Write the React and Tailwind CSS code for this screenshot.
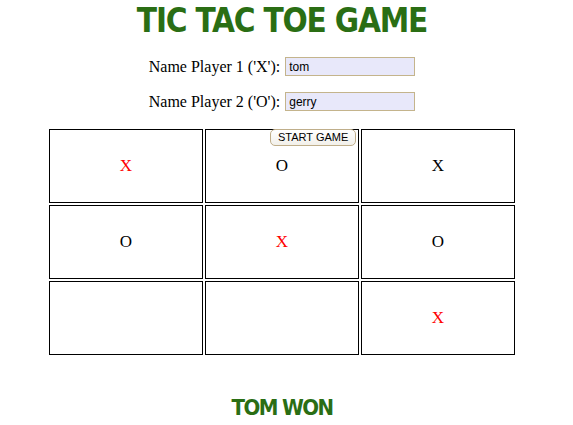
import React, { useState } from 'react';

const board = ['X', 'O', 'X', 'O', 'X', 'O', '', '', 'X'];
const winLine = [0, 4, 8];

const Cell = ({ value, win }) => (
  <div className="w-[154px] h-[74px] border border-black flex items-center justify-center">
    <span className={`text-[17px] font-['Liberation_Serif',serif] ${win ? 'text-[#ff0000]' : 'text-black'}`}>
      {value}
    </span>
  </div>
);

const NameRow = ({ label, value, onChange }) => (
  <div className="flex items-center h-[19px]">
    <span className="text-[16px] font-['Liberation_Serif',serif] text-black mr-[5px]">{label}</span>
    <input
      type="text"
      value={value}
      onChange={onChange}
      className="w-[130px] h-[19px] px-[3px] bg-[#e8e8fa] border border-[#c4b48c] text-[12px] font-['Liberation_Sans',sans-serif] text-black outline-none"
    />
  </div>
);

export default function App() {
  const [p1, setP1] = useState('tom');
  const [p2, setP2] = useState('gerry');

  return (
    <div className="w-[564px] h-[425px] bg-white flex flex-col items-center">
      <h1 className="mt-[3px] h-[36px] leading-[36px] text-[33px] font-bold text-[#2a6e14] font-['DejaVu_Sans_Condensed','DejaVu_Sans',sans-serif] tracking-[-1.2px]">
        TIC TAC TOE GAME
      </h1>
      <div className="mt-[18px] flex flex-col items-center gap-[16px]">
        <NameRow label="Name Player 1 ('X'):" value={p1} onChange={(e) => setP1(e.target.value)} />
        <NameRow label="Name Player 2 ('O'):" value={p2} onChange={(e) => setP2(e.target.value)} />
      </div>
      <div className="relative mt-[18px]">
        <div className="grid grid-cols-3 gap-[2px]">
          {board.map((v, i) => (
            <Cell key={i} value={v} win={winLine.includes(i)} />
          ))}
        </div>
        <button className="absolute left-[221px] top-0 h-[17px] px-[7px] rounded-[5px] border border-[#bfae8a] bg-gradient-to-b from-white to-[#f2f0ea] text-[11px] leading-[15px] font-['Liberation_Sans',sans-serif] text-black">
          START GAME
        </button>
      </div>
      <div className="mt-[36px] text-[22px] font-bold text-[#2a6e14] font-['DejaVu_Sans_Condensed','DejaVu_Sans',sans-serif] tracking-[-1.6px]">
        TOM WON
      </div>
    </div>
  );
}
